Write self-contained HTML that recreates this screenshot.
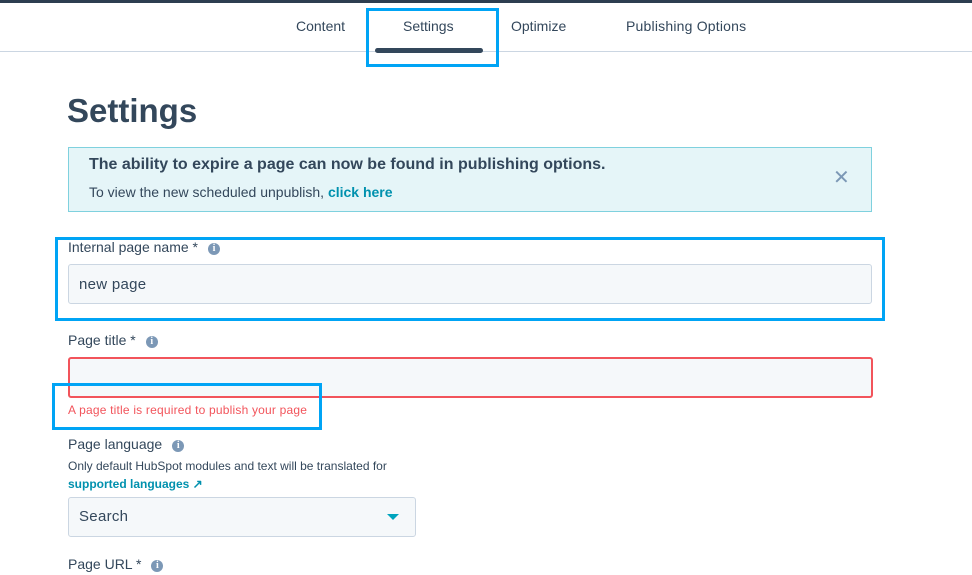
<!DOCTYPE html>
<html><head><style>
*{margin:0;padding:0;box-sizing:border-box}
body{width:972px;height:575px;overflow:hidden;background:#fff;font-family:"Liberation Sans",sans-serif;color:#33475b;position:relative}
.a{position:absolute;white-space:nowrap}
.tab{font-size:14px;top:18px;color:#33475b}
.inp{position:absolute;background:#f5f8fa;border:1px solid #cbd6e2;border-radius:3px}
.lbl{font-size:14px;color:#33475b}
.i{display:inline-block;width:12px;height:12px;border-radius:50%;background:#7c98b6;color:#fff;font-size:10px;font-weight:bold;text-align:center;line-height:12px;vertical-align:1px;margin-left:10px;font-family:"Liberation Serif",serif}
.blue{position:absolute;border:3px solid #00a4f5}
</style></head><body>
<div class="a" style="left:0;top:0;width:972px;height:3px;background:#2d3e50"></div>
<div class="a tab" style="left:296px">Content</div>
<div class="a tab" style="left:403px">Settings</div>
<div class="a tab" style="left:511px">Optimize</div>
<div class="a tab" style="left:626px;letter-spacing:0.2px">Publishing Options</div>
<div class="a" style="left:0;top:51px;width:972px;height:1px;background:#cbd6e2"></div>
<div class="a" style="left:375px;top:48px;width:108px;height:5px;border-radius:3px;background:#33475b"></div>
<div class="blue" style="left:366px;top:8px;width:133px;height:59px"></div>
<div class="a" style="left:67px;top:92px;font-size:33px;font-weight:bold;color:#33475b">Settings</div>
<div class="a" style="left:68px;top:147px;width:804px;height:65px;background:#e5f5f8;border:1px solid #7fd1de"></div>
<div class="a" style="left:89px;top:156px;font-size:16px;font-weight:bold">The ability to expire a page can now be found in publishing options.</div>
<div class="a" style="left:89px;top:184px;font-size:14px">To view the new scheduled unpublish, <b style="color:#0091ae">click here</b></div>
<div class="a" style="left:833px;top:168px;font-size:20px;color:#7c98b6;line-height:20px">✕</div>
<div class="a lbl" style="left:68px;top:239px">Internal page name *<span class="i">i</span></div>
<div class="inp" style="left:68px;top:264px;width:804px;height:40px"></div>
<div class="a" style="left:79px;top:276px;font-size:15px;letter-spacing:0.3px">new page</div>
<div class="blue" style="left:55px;top:237px;width:830px;height:84px"></div>
<div class="a lbl" style="left:68px;top:332px">Page title *<span class="i">i</span></div>
<div class="inp" style="left:68px;top:357px;width:805px;height:41px;border:2px solid #f2545b"></div>
<div class="a" style="left:68px;top:403px;font-size:12px;color:#f2545b;letter-spacing:0.2px">A page title is required to publish your page</div>
<div class="blue" style="left:52px;top:383px;width:270px;height:47px"></div>
<div class="a lbl" style="left:68px;top:436px">Page language<span class="i">i</span></div>
<div class="a" style="left:68px;top:459px;font-size:12px">Only default HubSpot modules and text will be translated for</div>
<div class="a" style="left:68px;top:477px;font-size:12px;font-weight:bold;color:#0091ae">supported languages ↗</div>
<div class="inp" style="left:68px;top:497px;width:348px;height:40px"></div>
<div class="a" style="left:79px;top:508px;font-size:15px;letter-spacing:0.3px">Search</div>
<div class="a" style="left:387px;top:514px;width:0;height:0;border-left:6px solid transparent;border-right:6px solid transparent;border-top:6px solid #00a4bd"></div>
<div class="a lbl" style="left:68px;top:556px">Page URL *<span class="i">i</span></div>
</body></html>
